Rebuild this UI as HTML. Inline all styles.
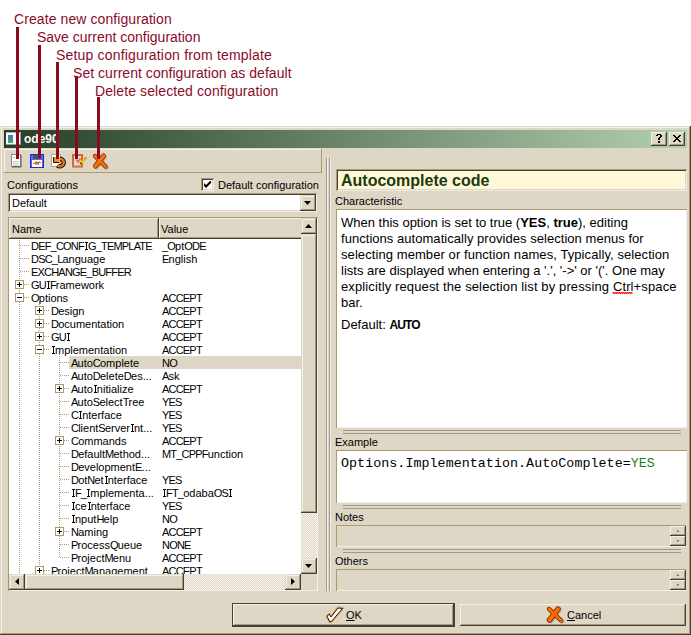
<!DOCTYPE html>
<html><head><meta charset="utf-8">
<style>
*{box-sizing:border-box;margin:0;padding:0}
html,body{width:691px;height:635px;overflow:hidden;background:#fff}
body{position:relative;font-family:"Liberation Sans",sans-serif;font-size:11px;color:#000}
.a{position:absolute}
.t{position:absolute;white-space:pre;line-height:13px;font-size:11px}
.ann{position:absolute;white-space:pre;font-size:14px;line-height:16px;color:#8a0c2a}
.rl{position:absolute;width:3px;background:#8b0a1e;z-index:50}
.face{background:#ded7c6}
.sunk{box-shadow:inset 1px 1px #ab9a6e,inset -1px -1px #f4f1ea,inset 2px 2px #404040,inset -2px -2px #ded7c6}
.raised{background:#ded7c6;box-shadow:inset -1px -1px #404040,inset 1px 1px #ded7c6,inset -2px -2px #ab9a6e,inset 2px 2px #f4f1ea}
.btn{position:absolute;background:#ded7c6;box-shadow:inset -1px -1px #404040,inset 1px 1px #f4f1ea,inset -2px -2px #ab9a6e}
.pm{position:absolute;width:9px;height:9px;border:1px solid #ab9a6e;background:#fff}
.pm:before{content:"";position:absolute;left:1px;top:3px;width:5px;height:1px;background:#000}
.pm.p:after{content:"";position:absolute;left:3px;top:1px;width:1px;height:5px;background:#000}
.vd{position:absolute;width:1px;background:repeating-linear-gradient(to bottom,#ab9a6e 0,#ab9a6e 1px,transparent 1px,transparent 2px)}
.hd{position:absolute;height:1px;background:repeating-linear-gradient(to right,#ab9a6e 0,#ab9a6e 1px,transparent 1px,transparent 2px)}
.chk{background-color:#ded7c6;background-image:linear-gradient(45deg,#f7f4ee 25%,transparent 25%,transparent 75%,#f7f4ee 75%),linear-gradient(45deg,#f7f4ee 25%,transparent 25%,transparent 75%,#f7f4ee 75%);background-size:2px 2px;background-position:0 0,1px 1px}
.si{display:inline-block;position:relative;width:4px;height:8px;vertical-align:baseline}.si:before{content:'';position:absolute;left:1px;top:0;width:3px;height:8px;border-top:1px solid #000;border-bottom:1px solid #000;box-sizing:border-box}.si:after{content:'';position:absolute;left:2px;top:0;width:1px;height:8px;background:#000}
.rt{position:absolute;white-space:pre;font-size:13px;line-height:16px}
</style></head><body>

<div class="ann" style="left:14px;top:11px;letter-spacing:0.09px">Create new configuration</div>
<div class="ann" style="left:37px;top:29px;letter-spacing:0px">Save current configuration</div>
<div class="ann" style="left:56px;top:47px;letter-spacing:0.18px">Setup configuration from template</div>
<div class="ann" style="left:73px;top:65px;letter-spacing:0.04px">Set current configuration as default</div>
<div class="ann" style="left:95px;top:83px;letter-spacing:0.1px">Delete selected configuration</div>
<div class="rl" style="left:16px;top:27px;height:132px"></div>
<div class="rl" style="left:38px;top:45px;height:113px"></div>
<div class="rl" style="left:56px;top:62px;height:97px"></div>
<div class="rl" style="left:75px;top:76px;height:83px"></div>
<div class="rl" style="left:97px;top:97px;height:62px"></div>
<div class="a face" style="left:0;top:126px;width:691px;height:509px;box-shadow:inset -1px -1px #404040,inset 1px 1px #ded7c6,inset -2px -2px #ab9a6e,inset 2px 2px #f4f1ea"></div>
<div class="a" style="left:4px;top:130px;width:683px;height:18px;background:linear-gradient(to right,#263d27,#b2d0af)"></div>
<div class="a" style="left:6px;top:132px;width:15px;height:13px;background:#fff;box-shadow:inset 0 1px #b0b0c0,inset -1px -1px #9a9aa8"></div>
<div class="a" style="left:8px;top:135px;width:5px;height:8px;background:linear-gradient(to bottom,#4a70c0,#40b060)"></div>
<div class="a" style="left:24px;top:133px;font-weight:bold;font-size:12px;line-height:12px;color:#fff;white-space:pre">ode90</div>
<div class="btn" style="left:651px;top:132px;width:16px;height:14px"></div>
<div class="btn" style="left:669px;top:132px;width:16px;height:14px"></div>
<svg class="a" style="left:0;top:0" width="691" height="160"><path d="M657 134h1v1h-1zM658 134h1v1h-1zM659 134h1v1h-1zM660 134h1v1h-1zM656 135h1v1h-1zM657 135h1v1h-1zM660 135h1v1h-1zM661 135h1v1h-1zM660 136h1v1h-1zM661 136h1v1h-1zM659 137h1v1h-1zM660 137h1v1h-1zM658 138h1v1h-1zM659 138h1v1h-1zM658 139h1v1h-1zM659 139h1v1h-1zM658 141h1v1h-1zM659 141h1v1h-1zM658 142h1v1h-1zM659 142h1v1h-1zM673 135h1v1h-1zM674 135h1v1h-1zM679 135h1v1h-1zM680 135h1v1h-1zM674 136h1v1h-1zM675 136h1v1h-1zM678 136h1v1h-1zM679 136h1v1h-1zM675 137h1v1h-1zM676 137h1v1h-1zM677 137h1v1h-1zM678 137h1v1h-1zM676 138h1v1h-1zM677 138h1v1h-1zM675 139h1v1h-1zM676 139h1v1h-1zM677 139h1v1h-1zM678 139h1v1h-1zM674 140h1v1h-1zM675 140h1v1h-1zM678 140h1v1h-1zM679 140h1v1h-1zM673 141h1v1h-1zM674 141h1v1h-1zM679 141h1v1h-1zM680 141h1v1h-1z" fill="#000"/></svg>
<div class="a" style="left:4px;top:149px;width:318px;height:24px;box-shadow:inset -1px -1px #ab9a6e,inset 1px 1px #f4f1ea"></div>
<svg class="a" style="left:0;top:150px" width="120" height="22" viewBox="0 150 120 22">
<rect x="11.5" y="154.5" width="9" height="12" fill="#fff" stroke="#8c8c8c"/>
<path d="M21 155v12h-9" stroke="#5a5a5a" fill="none"/>
<path d="M13 157.5h2M13 161.5h6M13 163.5h6M13 165.5h6" stroke="#c4c4c4"/>
<rect x="30" y="154" width="14" height="14" fill="#1c28d8"/>
<rect x="31" y="155" width="12" height="12" fill="#5a64f0"/>
<rect x="33" y="155" width="8" height="4" fill="#505058"/>
<rect x="32" y="160" width="10" height="7" fill="#fff"/>
<path d="M33 163.5c1-1 2 1 3-1s2 2 3 0s1 1 2 0" stroke="#e08020" stroke-width="1.3" fill="none"/><path d="M36 162v3M38 162v3" stroke="#402000" stroke-width="0.7"/>
<rect x="51.5" y="154.5" width="9" height="12" fill="#fff" stroke="#a8a8a8"/>
<path d="M60 158.7A3.8 3.8 0 1 1 57.4 165.3" stroke="#140a00" stroke-width="4.4" fill="none"/>
<path d="M60 158.7A3.8 3.8 0 1 1 57.4 165.3" stroke="#e07418" stroke-width="2.6" fill="none"/>
<path d="M53.5 157v5.5h6" stroke="#1a1000" stroke-width="1" fill="none"/>
<rect x="54" y="157" width="5.5" height="5" fill="#f39018"/>
<rect x="73" y="155" width="9" height="11.5" fill="#cfe0f8" stroke="#d66a22" stroke-width="2"/>
<path d="M72 167h10" stroke="#e88a40" stroke-width="1"/>
<path d="M76 159.5l2 2.5l2.5-3.5" stroke="#f07020" stroke-width="1.7" fill="none"/>
<path d="M80.8 163.2L85 159" stroke="#f0c000" stroke-width="2.4"/>
<path d="M80 164l1.2-1.2" stroke="#403000" stroke-width="1.4"/>
<circle cx="85.4" cy="158.2" r="1.3" fill="#f08020"/>
<path d="M95 156L105.5 166.5M103.5 156L95.5 166" stroke="#9a9080" stroke-width="4.5" stroke-linecap="round" transform="translate(1.2,1.2)" opacity="0.55"/>
<path d="M95 156L105.5 166.5" stroke="#7a2800" stroke-width="4.2" stroke-linecap="round"/>
<path d="M103.5 156L95.5 166" stroke="#7a2800" stroke-width="5" stroke-linecap="round"/>
<path d="M95 156L105.5 166.5" stroke="#ff7000" stroke-width="2.8" stroke-linecap="round"/>
<path d="M103.5 156L95.5 166" stroke="#ff7000" stroke-width="3.6" stroke-linecap="round"/>
</svg>
<div class="t" style="left:7px;top:179px">Configurations</div>
<div class="a" style="left:201px;top:178px;width:13px;height:13px;background:#fff;box-shadow:inset 1px 1px #ab9a6e,inset -1px -1px #f4f1ea,inset 2px 2px #404040,inset -2px -2px #ded7c6"></div>
<svg class="a" style="left:204px;top:181px" width="7" height="7"><path d="M0 2v3l2 2l5-5v-3l-5 5z" fill="#000"/></svg>
<div class="t" style="left:218px;top:179px">Default configuration</div>
<div class="a" style="left:8px;top:193px;width:309px;height:19px;background:#fff;box-shadow:inset 1px 1px #ab9a6e,inset -1px -1px #f4f1ea,inset 2px 2px #404040,inset -2px -2px #ded7c6"></div>
<div class="t" style="left:12px;top:197px">Default</div>
<div class="a" style="left:300px;top:195px;width:16px;height:16px;background:#ded7c6;box-shadow:inset -1px -1px #404040,inset 1px 1px #ded7c6,inset -2px -2px #ab9a6e,inset 2px 2px #f4f1ea"></div>
<svg class="a" style="left:304px;top:201px" width="7" height="4"><path d="M0 0h7l-3.5 4z" fill="#000"/></svg>
<div class="a" style="left:8px;top:217px;width:310px;height:374px;background:#fff;box-shadow:inset 1px 1px #ab9a6e,inset -1px -1px #f4f1ea"></div>
<div class="a" style="left:9px;top:218px;width:150px;height:21px;background:#ded7c6;box-shadow:inset -1px -1px #404040,inset 1px 1px #f4f1ea,inset -2px -2px #ab9a6e"></div>
<div class="a" style="left:159px;top:218px;width:144px;height:21px;background:#ded7c6;box-shadow:inset -1px -1px #404040,inset 1px 1px #f4f1ea,inset -2px -2px #ab9a6e"></div>
<div class="t" style="left:12px;top:223px">Name</div>
<div class="t" style="left:161px;top:223px">Value</div>
<div class="a" style="left:9px;top:239px;width:292px;height:335px;overflow:hidden">
<div class="a" style="left:60px;top:117px;width:232px;height:13px;background:#ded7c6"></div>
<div class="vd" style="left:10px;top:1px;height:334px"></div>
<div class="vd" style="left:30px;top:63px;height:272px"></div>
<div class="vd" style="left:50px;top:115px;height:204px"></div>
<div class="hd" style="left:11px;top:6px;width:9px"></div>
<div class="t" style="left:22px;top:1px"><span style="letter-spacing:-0.8px">DEF_CONF<i class="si"></i>G_TEMPLATE</span></div>
<div class="t" style="left:153px;top:1px"><span style="letter-spacing:-0.8px">_O</span>pt<span style="letter-spacing:-0.8px">ODE</span></div>
<div class="hd" style="left:11px;top:19px;width:9px"></div>
<div class="t" style="left:22px;top:14px"><span style="letter-spacing:-0.8px">DSC_L</span>anguage</div>
<div class="t" style="left:153px;top:14px"><span style="letter-spacing:-0.8px">E</span>nglish</div>
<div class="hd" style="left:11px;top:32px;width:9px"></div>
<div class="t" style="left:22px;top:27px"><span style="letter-spacing:-0.8px">EXCHANGE_BUFFER</span></div>
<div class="hd" style="left:11px;top:45px;width:9px"></div>
<div class="pm p" style="left:6px;top:41px"></div>
<div class="t" style="left:22px;top:40px"><span style="letter-spacing:-0.8px">GU<i class="si"></i>F</span>ramework</div>
<div class="hd" style="left:11px;top:58px;width:9px"></div>
<div class="pm" style="left:6px;top:54px"></div>
<div class="t" style="left:22px;top:53px"><span style="letter-spacing:-0.8px">O</span>ptions</div>
<div class="t" style="left:153px;top:53px"><span style="letter-spacing:-0.8px">ACCEPT</span></div>
<div class="hd" style="left:31px;top:71px;width:9px"></div>
<div class="pm p" style="left:26px;top:67px"></div>
<div class="t" style="left:42px;top:66px"><span style="letter-spacing:-0.8px">D</span>esign</div>
<div class="t" style="left:153px;top:66px"><span style="letter-spacing:-0.8px">ACCEPT</span></div>
<div class="hd" style="left:31px;top:84px;width:9px"></div>
<div class="pm p" style="left:26px;top:80px"></div>
<div class="t" style="left:42px;top:79px"><span style="letter-spacing:-0.8px">D</span>ocumentation</div>
<div class="t" style="left:153px;top:79px"><span style="letter-spacing:-0.8px">ACCEPT</span></div>
<div class="hd" style="left:31px;top:97px;width:9px"></div>
<div class="pm p" style="left:26px;top:93px"></div>
<div class="t" style="left:42px;top:92px"><span style="letter-spacing:-0.8px">GU<i class="si"></i></span></div>
<div class="t" style="left:153px;top:92px"><span style="letter-spacing:-0.8px">ACCEPT</span></div>
<div class="hd" style="left:31px;top:110px;width:9px"></div>
<div class="pm" style="left:26px;top:106px"></div>
<div class="t" style="left:42px;top:105px"><span style="letter-spacing:-0.8px"><i class="si"></i></span>mplementation</div>
<div class="t" style="left:153px;top:105px"><span style="letter-spacing:-0.8px">ACCEPT</span></div>
<div class="hd" style="left:51px;top:123px;width:9px"></div>
<div class="t" style="left:62px;top:118px"><span style="letter-spacing:-0.8px">A</span>uto<span style="letter-spacing:-0.8px">C</span>omplete</div>
<div class="t" style="left:153px;top:118px"><span style="letter-spacing:-0.8px">NO</span></div>
<div class="hd" style="left:51px;top:136px;width:9px"></div>
<div class="t" style="left:62px;top:131px"><span style="letter-spacing:-0.8px">A</span>uto<span style="letter-spacing:-0.8px">D</span>elete<span style="letter-spacing:-0.8px">D</span>es...</div>
<div class="t" style="left:153px;top:131px"><span style="letter-spacing:-0.8px">A</span>sk</div>
<div class="hd" style="left:51px;top:149px;width:9px"></div>
<div class="pm p" style="left:46px;top:145px"></div>
<div class="t" style="left:62px;top:144px"><span style="letter-spacing:-0.8px">A</span>uto<span style="letter-spacing:-0.8px"><i class="si"></i></span>nitialize</div>
<div class="t" style="left:153px;top:144px"><span style="letter-spacing:-0.8px">ACCEPT</span></div>
<div class="hd" style="left:51px;top:162px;width:9px"></div>
<div class="t" style="left:62px;top:157px"><span style="letter-spacing:-0.8px">A</span>uto<span style="letter-spacing:-0.8px">S</span>elect<span style="letter-spacing:-0.8px">T</span>ree</div>
<div class="t" style="left:153px;top:157px"><span style="letter-spacing:-0.8px">YES</span></div>
<div class="hd" style="left:51px;top:175px;width:9px"></div>
<div class="t" style="left:62px;top:170px"><span style="letter-spacing:-0.8px">C<i class="si"></i></span>nterface</div>
<div class="t" style="left:153px;top:170px"><span style="letter-spacing:-0.8px">YES</span></div>
<div class="hd" style="left:51px;top:188px;width:9px"></div>
<div class="t" style="left:62px;top:183px"><span style="letter-spacing:-0.8px">C</span>lient<span style="letter-spacing:-0.8px">S</span>erver<span style="letter-spacing:-0.8px"><i class="si"></i></span>nt...</div>
<div class="t" style="left:153px;top:183px"><span style="letter-spacing:-0.8px">YES</span></div>
<div class="hd" style="left:51px;top:201px;width:9px"></div>
<div class="pm p" style="left:46px;top:197px"></div>
<div class="t" style="left:62px;top:196px"><span style="letter-spacing:-0.8px">C</span>ommands</div>
<div class="t" style="left:153px;top:196px"><span style="letter-spacing:-0.8px">ACCEPT</span></div>
<div class="hd" style="left:51px;top:214px;width:9px"></div>
<div class="t" style="left:62px;top:209px"><span style="letter-spacing:-0.8px">D</span>efault<span style="letter-spacing:-0.8px">M</span>ethod...</div>
<div class="t" style="left:153px;top:209px"><span style="letter-spacing:-0.8px">MT_CPPF</span>unction</div>
<div class="hd" style="left:51px;top:227px;width:9px"></div>
<div class="t" style="left:62px;top:222px"><span style="letter-spacing:-0.8px">D</span>evelopment<span style="letter-spacing:-0.8px">E</span>...</div>
<div class="hd" style="left:51px;top:240px;width:9px"></div>
<div class="t" style="left:62px;top:235px"><span style="letter-spacing:-0.8px">D</span>ot<span style="letter-spacing:-0.8px">N</span>et<span style="letter-spacing:-0.8px"><i class="si"></i></span>nterface</div>
<div class="t" style="left:153px;top:235px"><span style="letter-spacing:-0.8px">YES</span></div>
<div class="hd" style="left:51px;top:253px;width:9px"></div>
<div class="t" style="left:62px;top:248px"><span style="letter-spacing:-0.8px"><i class="si"></i>F_<i class="si"></i></span>mplementa...</div>
<div class="t" style="left:153px;top:248px"><span style="letter-spacing:-0.8px"><i class="si"></i>FT_</span>odaba<span style="letter-spacing:-0.8px">OS<i class="si"></i></span></div>
<div class="hd" style="left:51px;top:266px;width:9px"></div>
<div class="t" style="left:62px;top:261px"><span style="letter-spacing:-0.8px"><i class="si"></i></span>ce<span style="letter-spacing:-0.8px"><i class="si"></i></span>nterface</div>
<div class="t" style="left:153px;top:261px"><span style="letter-spacing:-0.8px">YES</span></div>
<div class="hd" style="left:51px;top:279px;width:9px"></div>
<div class="t" style="left:62px;top:274px"><span style="letter-spacing:-0.8px"><i class="si"></i></span>nput<span style="letter-spacing:-0.8px">H</span>elp</div>
<div class="t" style="left:153px;top:274px"><span style="letter-spacing:-0.8px">NO</span></div>
<div class="hd" style="left:51px;top:292px;width:9px"></div>
<div class="pm p" style="left:46px;top:288px"></div>
<div class="t" style="left:62px;top:287px"><span style="letter-spacing:-0.8px">N</span>aming</div>
<div class="t" style="left:153px;top:287px"><span style="letter-spacing:-0.8px">ACCEPT</span></div>
<div class="hd" style="left:51px;top:305px;width:9px"></div>
<div class="t" style="left:62px;top:300px"><span style="letter-spacing:-0.8px">P</span>rocess<span style="letter-spacing:-0.8px">Q</span>ueue</div>
<div class="t" style="left:153px;top:300px"><span style="letter-spacing:-0.8px">NONE</span></div>
<div class="hd" style="left:51px;top:318px;width:9px"></div>
<div class="t" style="left:62px;top:313px"><span style="letter-spacing:-0.8px">P</span>roject<span style="letter-spacing:-0.8px">M</span>enu</div>
<div class="t" style="left:153px;top:313px"><span style="letter-spacing:-0.8px">ACCEPT</span></div>
<div class="hd" style="left:31px;top:331px;width:9px"></div>
<div class="pm p" style="left:26px;top:327px"></div>
<div class="t" style="left:42px;top:326px"><span style="letter-spacing:-0.8px">P</span>roject<span style="letter-spacing:-0.8px">M</span>anagement</div>
<div class="t" style="left:153px;top:326px"><span style="letter-spacing:-0.8px">ACCEPT</span></div>
</div>
<div class="a chk" style="left:301px;top:218px;width:16px;height:356px"></div>
<div class="btn" style="left:301px;top:218px;width:16px;height:16px;box-shadow:inset -1px -1px #404040,inset 1px 1px #ded7c6,inset -2px -2px #ab9a6e,inset 2px 2px #f4f1ea"></div>
<svg class="a" style="left:305px;top:224px" width="7" height="4"><path d="M0 4h7l-3.5-4z" fill="#000"/></svg>
<div class="btn" style="left:301px;top:234px;width:16px;height:279px;box-shadow:inset -1px -1px #404040,inset 1px 1px #ded7c6,inset -2px -2px #ab9a6e,inset 2px 2px #f4f1ea"></div>
<div class="btn" style="left:301px;top:558px;width:16px;height:16px;box-shadow:inset -1px -1px #404040,inset 1px 1px #ded7c6,inset -2px -2px #ab9a6e,inset 2px 2px #f4f1ea"></div>
<svg class="a" style="left:305px;top:564px" width="7" height="4"><path d="M0 0h7l-3.5 4z" fill="#000"/></svg>
<div class="a chk" style="left:9px;top:574px;width:292px;height:16px"></div>
<div class="btn" style="left:9px;top:574px;width:16px;height:16px;box-shadow:inset -1px -1px #404040,inset 1px 1px #ded7c6,inset -2px -2px #ab9a6e,inset 2px 2px #f4f1ea"></div>
<svg class="a" style="left:15px;top:578px" width="4" height="7"><path d="M4 0v7l-4-3.5z" fill="#000"/></svg>
<div class="btn" style="left:25px;top:574px;width:159px;height:16px;box-shadow:inset -1px -1px #404040,inset 1px 1px #ded7c6,inset -2px -2px #ab9a6e,inset 2px 2px #f4f1ea"></div>
<div class="btn" style="left:285px;top:574px;width:16px;height:16px;box-shadow:inset -1px -1px #404040,inset 1px 1px #ded7c6,inset -2px -2px #ab9a6e,inset 2px 2px #f4f1ea"></div>
<svg class="a" style="left:291px;top:578px" width="4" height="7"><path d="M0 0v7l4-3.5z" fill="#000"/></svg>
<div class="a face" style="left:301px;top:574px;width:16px;height:16px"></div>
<div class="a" style="left:326px;top:158px;width:1px;height:433px;background:#a09888"></div>
<div class="a" style="left:327px;top:158px;width:1px;height:433px;background:#f4f1ea"></div>
<div class="a" style="left:329px;top:158px;width:1px;height:433px;background:#a09888"></div>
<div class="a" style="left:330px;top:158px;width:1px;height:433px;background:#f4f1ea"></div>
<div class="a" style="left:336px;top:169px;width:351px;height:22px;background:#fff8d8;box-shadow:inset 1px 1px #ab9a6e,inset -1px -1px #f0ebe0,inset 2px 2px #404040,inset -2px -2px #ded7c6"></div>
<div class="a" style="left:341px;top:172px;white-space:pre;font-weight:bold;font-size:16px;line-height:18px;color:#1c3a10">Autocomplete code</div>
<div class="t" style="left:335px;top:195px">Characteristic</div>
<div class="a" style="left:336px;top:209px;width:351px;height:219px;background:#fff;box-shadow:inset 1px 1px #ab9a6e,inset -1px -1px #f4f1ea"></div>
<div class="rt" style="left:341px;top:215px;letter-spacing:0px">When this option is set to true (<b>YES</b>, <b>true</b>), editing</div>
<div class="rt" style="left:341px;top:231px;letter-spacing:0.04px">functions automatically provides selection menus for</div>
<div class="rt" style="left:341px;top:247px;letter-spacing:0.08px">selecting member or function names, Typically, selection</div>
<div class="rt" style="left:341px;top:263px;letter-spacing:0px">lists are displayed when entering a '.', '-&gt;' or '('. One may</div>
<div class="rt" style="left:341px;top:279px;letter-spacing:0.12px">explicitly request the selection list by pressing Ctrl+space</div>
<div class="rt" style="left:341px;top:295px;letter-spacing:0px">bar.</div>
<svg class="a" style="left:612px;top:291.5px" width="22" height="3"><path d="M0.5 1.5l1-1l1 1l1-1l1 1l1-1l1 1l1-1l1 1l1-1l1 1l1-1l1 1l1-1l1 1l1-1l1 1l1-1l1 1l1-1l1 1" stroke="#ff1010" stroke-width="1.1" fill="none"/></svg>
<div class="rt" style="left:341px;top:317px">Default: <b style="font-size:12px;letter-spacing:-0.9px">AUTO</b></div>
<div class="a" style="left:343px;top:430px;width:338px;height:4px;border-top:1px solid #a09888;border-bottom:1px solid #a09888"></div>
<div class="a" style="left:343px;top:505px;width:338px;height:4px;border-top:1px solid #a09888;border-bottom:1px solid #a09888"></div>
<div class="a" style="left:343px;top:549px;width:338px;height:4px;border-top:1px solid #a09888;border-bottom:1px solid #a09888"></div>
<div class="t" style="left:335px;top:436px">Example</div>
<div class="a" style="left:336px;top:450px;width:351px;height:53px;background:#fff;box-shadow:inset 1px 1px #ab9a6e,inset -1px -1px #f4f1ea"></div>
<div class="a" style="left:341px;top:456px;white-space:pre;font-family:'Liberation Mono',monospace;font-size:13.33px;line-height:15px;letter-spacing:0.05px">Options.Implementation.AutoComplete=<span style="color:#208020">YES</span></div>
<div class="t" style="left:335px;top:511px">Notes</div>
<div class="t" style="left:335px;top:555px">Others</div>
<div class="a" style="left:336px;top:525px;width:350px;height:22px;box-shadow:inset 1px 1px #ab9a6e,inset -1px -1px #f4f1ea"></div>
<div class="btn" style="left:670px;top:526px;width:16px;height:10px"></div>
<div class="btn" style="left:670px;top:536px;width:16px;height:10px"></div>
<div class="a" style="left:677px;top:530px;width:2px;height:2px;border-left:1px solid #707070;border-bottom:1px solid #707070"></div>
<div class="a" style="left:677px;top:540px;width:2px;height:2px;border-left:1px solid #707070;border-top:1px solid #707070"></div>
<div class="a" style="left:336px;top:569px;width:350px;height:22px;box-shadow:inset 1px 1px #ab9a6e,inset -1px -1px #f4f1ea"></div>
<div class="btn" style="left:670px;top:570px;width:16px;height:10px"></div>
<div class="btn" style="left:670px;top:580px;width:16px;height:10px"></div>
<div class="a" style="left:677px;top:574px;width:2px;height:2px;border-left:1px solid #707070;border-bottom:1px solid #707070"></div>
<div class="a" style="left:677px;top:584px;width:2px;height:2px;border-left:1px solid #707070;border-top:1px solid #707070"></div>
<div class="a" style="left:232px;top:603px;width:223px;height:24px;background:#ded7c6;box-shadow:inset 0 0 0 1px #404040,inset -2px -2px #404040,inset 2px 2px #f4f1ea,inset -3px -3px #ab9a6e"></div>
<div class="t" style="left:346px;top:609px"><u>O</u>K</div>
<svg class="a" style="left:322px;top:604px" width="24" height="22" viewBox="322 604 24 22">
<path d="M327 616.2L329.3 614.2L331 617L338 608L342.6 608.4L331.4 621.6L329.6 621.6Z" stroke="#f4a040" stroke-width="3" stroke-linejoin="round" fill="#f4a040" opacity="0.75"/>
<path d="M327 616.2L329.3 614.2L331 617L338 608L342.6 608.4L331.4 621.6L329.6 621.6Z" stroke="#101010" stroke-width="1" stroke-linejoin="round" fill="#fff"/>
</svg>
<div class="a" style="left:460px;top:604px;width:226px;height:22px;background:#ded7c6;box-shadow:inset -1px -1px #404040,inset 1px 1px #f4f1ea,inset -2px -2px #ab9a6e"></div>
<div class="t" style="left:567px;top:609px"><u>C</u>ancel</div>
<svg class="a" style="left:544px;top:604px" width="22" height="22" viewBox="544 604 22 22">
<path d="M549 609L561 620.5M558 609L549.5 620" stroke="#a09888" stroke-width="4.5" stroke-linecap="round" transform="translate(1.5,1)" opacity="0.6"/>
<path d="M549 609L561 620.5" stroke="#702000" stroke-width="4.4" stroke-linecap="round"/>
<path d="M558 609L549.5 620" stroke="#702000" stroke-width="5.4" stroke-linecap="round"/>
<path d="M549 609L561 620.5" stroke="#ff6a00" stroke-width="3" stroke-linecap="round"/>
<path d="M558 609L549.5 620" stroke="#ff6a00" stroke-width="4" stroke-linecap="round"/>
</svg>
</body></html>
